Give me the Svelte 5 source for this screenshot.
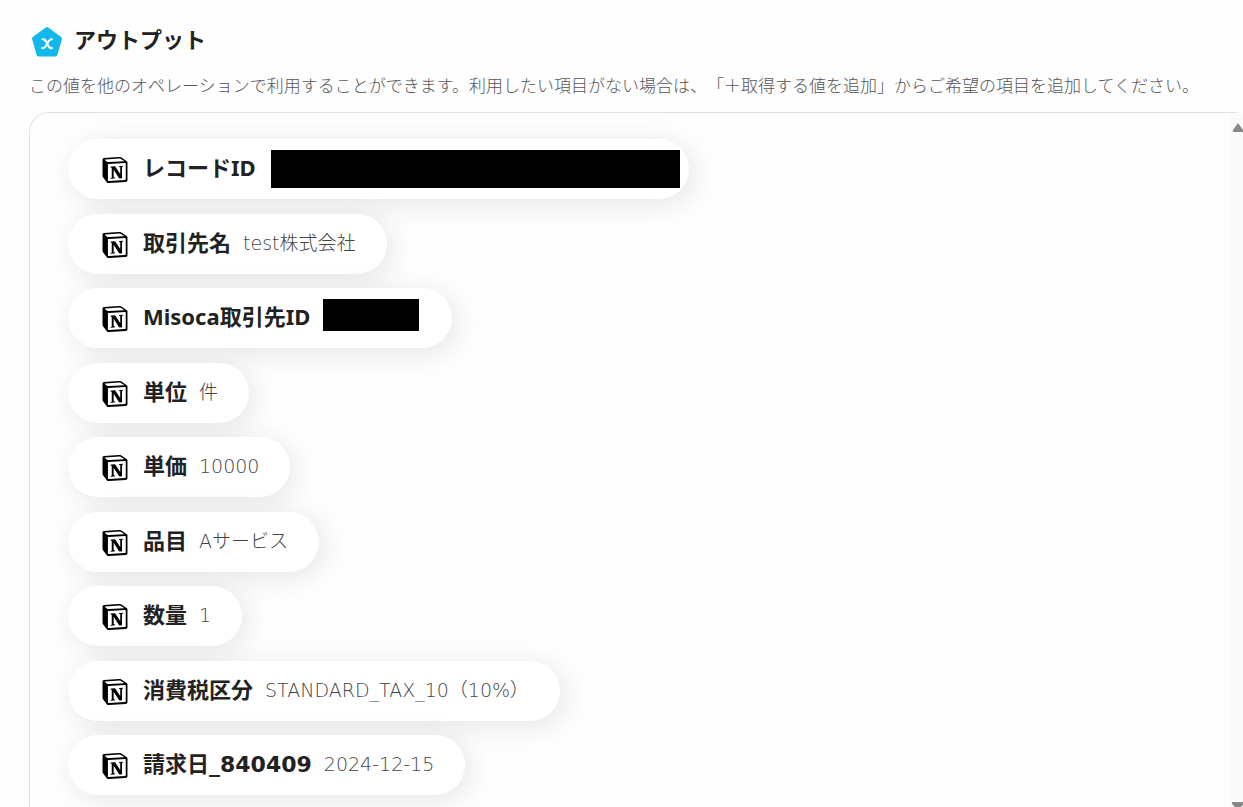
<script lang="ts">
    type Cover = { width: number; height: number; left: number; top: number };
    type Output = {
        label: string;
        value?: string;
        numeric?: boolean;
        valueWidth?: number;
        cover?: Cover;
    };

    const outputs: Array<Output> = [
        { label: "レコードID", valueWidth: 390, cover: { width: 409, height: 38, left: 3, top: -19 } },
        { label: "取引先名", value: "test株式会社" },
        { label: "Misoca取引先ID", valueWidth: 99, cover: { width: 96, height: 32, left: 1, top: -19 } },
        { label: "単位", value: "件" },
        { label: "単価", value: "10000" },
        { label: "品目", value: "Aサービス" },
        { label: "数量", value: "1" },
        { label: "消費税区分", value: "STANDARD_TAX_10（10%）" },
        { label: "請求日_840409", value: "2024-12-15", numeric: true },
    ];
</script>

<main>
    <header>
        <svg class="badge" viewBox="0 0 32 32" aria-hidden="true">
            <path d="M16 3 L29 12.500 L24.500 28.500 H7.500 L3 12.500 Z" fill="#12b8ec" stroke="#12b8ec" stroke-width="4" stroke-linejoin="round" />
            <path d="M11.500 13.300 C14 12.600 14.700 14.500 16.200 17.700 S18.500 22.800 21 22.100 M21 13.300 C18.700 12.600 17.700 14.800 16.200 17.700 S13.500 22.800 11 22.100" fill="none" stroke="#fff" stroke-width="2" stroke-linecap="round" />
        </svg>
        <h1>アウトプット</h1>
    </header>
    <p>この値を他のオペレーションで利用することができます。利用したい項目がない場合は、「＋取得する値を追加」からご希望の項目を追加してください。</p>

    <section>
        <ul>
            {#each outputs as output}
                <li>
                    <svg class="cube" viewBox="0 0 24 24" aria-hidden="true">
                        <path d="M1 3 L5.300 6.500 V22.500 L1 17 Z" />
                        <path d="M4.459 4.208c.746.606 1.026.56 2.428.466l13.215-.793c.28 0 .047-.28-.046-.326L17.86 1.968c-.42-.326-.981-.7-2.055-.607L3.01 2.295c-.466.046-.56.28-.374.466zm.793 3.08v13.904c0 .747.373 1.027 1.214.98l14.523-.84c.841-.046.935-.56.935-1.167V6.354c0-.606-.233-.933-.748-.887l-15.177.887c-.56.047-.747.327-.747.933zm14.337.745c.093.42 0 .84-.42.888l-.7.14v10.264c-.608.327-1.168.514-1.635.514-.748 0-.935-.234-1.495-.933l-4.577-7.186v6.952L12.21 19s0 .84-1.168.84l-3.222.186c-.093-.186 0-.653.327-.746l.84-.233V9.854L7.822 9.76c-.094-.42.14-1.026.793-1.073l3.456-.233 4.764 7.279v-6.44l-1.215-.139c-.093-.514.28-.887.747-.933zM1.936 1.035l13.31-.98c1.634-.14 2.055-.047 3.082.7l4.249 2.986c.7.513.934.653.934 1.213v16.378c0 1.026-.373 1.634-1.68 1.726l-15.458.934c-.98.047-1.448-.093-1.962-.747l-3.129-4.06c-.56-.747-.793-1.306-.793-1.96V2.667c0-.839.374-1.54 1.447-1.632z" />
                    </svg>
                    <strong class:numeric={output.numeric}>{output.label}</strong>
                    {#if output.cover}
                        <span class="hidden-value" style="width: {output.valueWidth}px">
                            <span
                                class="cover"
                                style="width: {output.cover.width}px; height: {output.cover.height}px; left: {output.cover.left}px; top: {output.cover.top}px"
                            ></span>
                        </span>
                    {:else}
                        <span class="value">{output.value}</span>
                    {/if}
                </li>
            {/each}
        </ul>
        <div class="scrollbar" aria-hidden="true">
            <svg viewBox="0 0 12 10"><path d="M6 0 L11 7 Q12 9 10 9 H2 Q0 9 1 7 Z" /></svg>
            <svg class="down" viewBox="0 0 12 5"><path d="M0 0 H12 V2 L9 5 H3 L0 2 Z" /></svg>
        </div>
    </section>
</main>

<style>
    :global(body) {
        margin: 0;
        background-color: #fefefe;
    }

    main {
        box-sizing: border-box;
        display: flex;
        flex-direction: column;
        min-height: 100vh;
        padding: 24px 0 0 29px;
        overflow: hidden;
        font-family: "Noto Sans", "Noto Sans CJK JP", sans-serif;
        color: #222;
    }

    header {
        display: flex;
        align-items: center;
        gap: 11px;
        height: 34px;
        padding-left: 2px;
    }

    .badge {
        width: 32px;
        height: 32px;
        margin-top: 2px;
    }

    h1 {
        margin: 0;
        padding-bottom: 4px;
        font-size: 22px;
        line-height: 30px;
        font-weight: 700;
    }

    p {
        margin: 14px 0 15px;
        font-family: "Noto Sans CJK JP", sans-serif;
        font-size: 17px;
        line-height: 25px;
        font-weight: 300;
        color: #555;
        white-space: nowrap;
        text-spacing-trim: space-all;
    }

    section {
        flex: 1;
        display: flex;
        border: 1px solid #e2e2e2;
        border-width: 1px 0 0 1px;
        border-radius: 20px 8px 0 0;
    }

    ul {
        flex: 1;
        display: flex;
        flex-direction: column;
        align-items: flex-start;
        justify-content: space-between;
        margin: 0;
        padding: 26px 38px 12px;
        list-style: none;
    }

    li {
        box-sizing: border-box;
        display: flex;
        align-items: center;
        height: 60px;
        padding: 0 31px 0 34px;
        border-radius: 30px;
        background-color: #fff;
        box-shadow: 5px 5px 30px rgba(0, 0, 0, 0.1);
        white-space: nowrap;
    }

    .cube {
        width: 26px;
        height: 26px;
        margin: 2px 15px 0 0;
    }

    strong {
        margin-right: 12px;
        padding-bottom: 4px;
        font-size: 22px;
        line-height: 30px;
        font-weight: 700;
    }

    .numeric {
        padding-bottom: 0;
        font-family: "DejaVu Sans", "Noto Sans CJK JP", sans-serif;
    }

    .value {
        padding-bottom: 2px;
        font-family: "DejaVu Sans", "Noto Sans CJK JP", sans-serif;
        font-size: 19px;
        line-height: 30px;
        font-weight: 200;
        color: #444;
    }

    .hidden-value {
        position: relative;
    }

    .cover {
        position: absolute;
        background-color: #000;
    }

    .scrollbar {
        flex: none;
        box-sizing: border-box;
        display: flex;
        flex-direction: column;
        align-items: flex-end;
        justify-content: space-between;
        width: 14px;
        padding-top: 10px;
        background-color: #fafafa;
    }

    .scrollbar svg {
        width: 12px;
        height: 10px;
        margin-right: -1px;
        fill: #888;
    }

    .scrollbar .down {
        height: 5px;
    }
</style>
